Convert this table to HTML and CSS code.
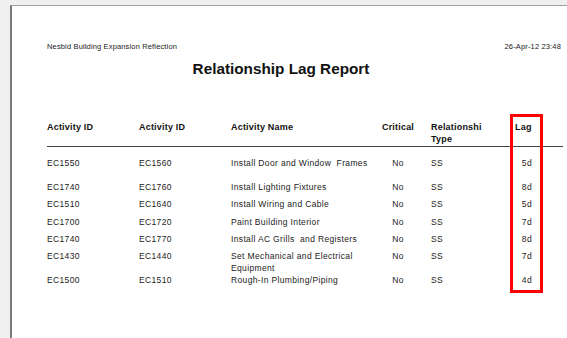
FILE: index.html
```html
<!DOCTYPE html>
<html>
<head>
<meta charset="utf-8">
<link rel="stylesheet" href="styles.css">
</head>
<body>
<div class="page">
  <div class="content">
    <div class="top">
      <span class="project">Nesbid Building Expansion Reflection</span>
      <span class="date">26-Apr-12 23:48</span>
    </div>
    <h1 class="title">Relationship Lag Report</h1>
    <table class="report">
      <colgroup>
        <col class="c-id"><col class="c-id"><col class="c-name"><col class="c-crit"><col class="c-type"><col class="c-lag">
      </colgroup>
      <thead>
        <tr>
          <th>Activity ID</th>
          <th>Activity ID</th>
          <th>Activity Name</th>
          <th class="crit">Critical</th>
          <th>Relationshi<br>Type</th>
          <th>Lag</th>
        </tr>
      </thead>
      <tbody>
        <tr class="first"><td>EC1550</td><td>EC1560</td><td>Install Door and Window&nbsp; Frames</td><td class="crit">No</td><td>SS</td><td class="lag">5d</td></tr>
        <tr><td>EC1740</td><td>EC1760</td><td>Install Lighting Fixtures</td><td class="crit">No</td><td>SS</td><td class="lag">8d</td></tr>
        <tr><td>EC1510</td><td>EC1640</td><td>Install Wiring and Cable</td><td class="crit">No</td><td>SS</td><td class="lag">5d</td></tr>
        <tr><td>EC1700</td><td>EC1720</td><td>Paint Building Interior</td><td class="crit">No</td><td>SS</td><td class="lag">7d</td></tr>
        <tr><td>EC1740</td><td>EC1770</td><td>Install AC Grills&nbsp; and Registers</td><td class="crit">No</td><td>SS</td><td class="lag">8d</td></tr>
        <tr><td>EC1430</td><td>EC1440</td><td>Set Mechanical and Electrical Equipment</td><td class="crit">No</td><td>SS</td><td class="lag">7d</td></tr>
        <tr><td>EC1500</td><td>EC1510</td><td>Rough-In Plumbing/Piping</td><td class="crit">No</td><td>SS</td><td class="lag">4d</td></tr>
      </tbody>
    </table>
  </div>
  <div class="highlight"></div>
</div>
</body>
</html>
```
FILE: styles.css
```css
html, body {
  margin: 0;
  padding: 0;
}
body {
  background: #f0f0f0;
  width: 567px;
  height: 338px;
  overflow: hidden;
  padding: 5px 0 0 10px;
  box-sizing: border-box;
  font-family: "Liberation Sans", Arial, sans-serif;
  color: #1a1a1a;
}
.page {
  position: relative;
  background: #fff;
  height: 100%;
  border-top: 1px solid #a0a0a0;
  border-left: 2px solid #7a7a7a;
  box-sizing: border-box;
  padding: 36px 0 0 35px;
}
.content {
  width: 516px;
}
.top {
  display: flex;
  justify-content: space-between;
  width: 514px;
  font-size: 7.5px;
  line-height: 10px;
  letter-spacing: 0.15px;
}
.title {
  margin: 8px 0 0 0;
  padding-right: 48px;
  text-align: center;
  font-size: 15.3px;
  line-height: 18px;
  font-weight: bold;
  color: #111;
}
.report {
  margin-top: 42.5px;
  border-collapse: collapse;
  table-layout: fixed;
  width: 516px;
}
.c-id { width: 92px; }
.c-name { width: 144px; }
.c-crit { width: 56px; }
.c-type { width: 84px; }
.c-lag { width: 48px; }
.report th {
  text-align: left;
  vertical-align: top;
  font-size: 9px;
  line-height: 12px;
  letter-spacing: 0.2px;
  font-weight: bold;
  padding: 0 0 1.5px 0;
  border-bottom: 1px solid #444;
  color: #111;
}
.report th.crit {
  text-align: center;
  padding-right: 10px;
}
.report td {
  vertical-align: top;
  font-size: 8.5px;
  line-height: 12px;
  letter-spacing: 0.35px;
  height: 17.3px;
  padding: 0;
  color: #222;
}
.report tbody tr:first-child td {
  padding-top: 10px;
  height: 24px;
}
.report td.crit {
  text-align: center;
  padding-right: 10px;
}
.report td.lag {
  text-align: right;
  padding-right: 31px;
}
.highlight {
  position: absolute;
  left: 498px;
  top: 108px;
  width: 33px;
  height: 179px;
  border: 3px solid #f00;
  box-sizing: border-box;
}
```
